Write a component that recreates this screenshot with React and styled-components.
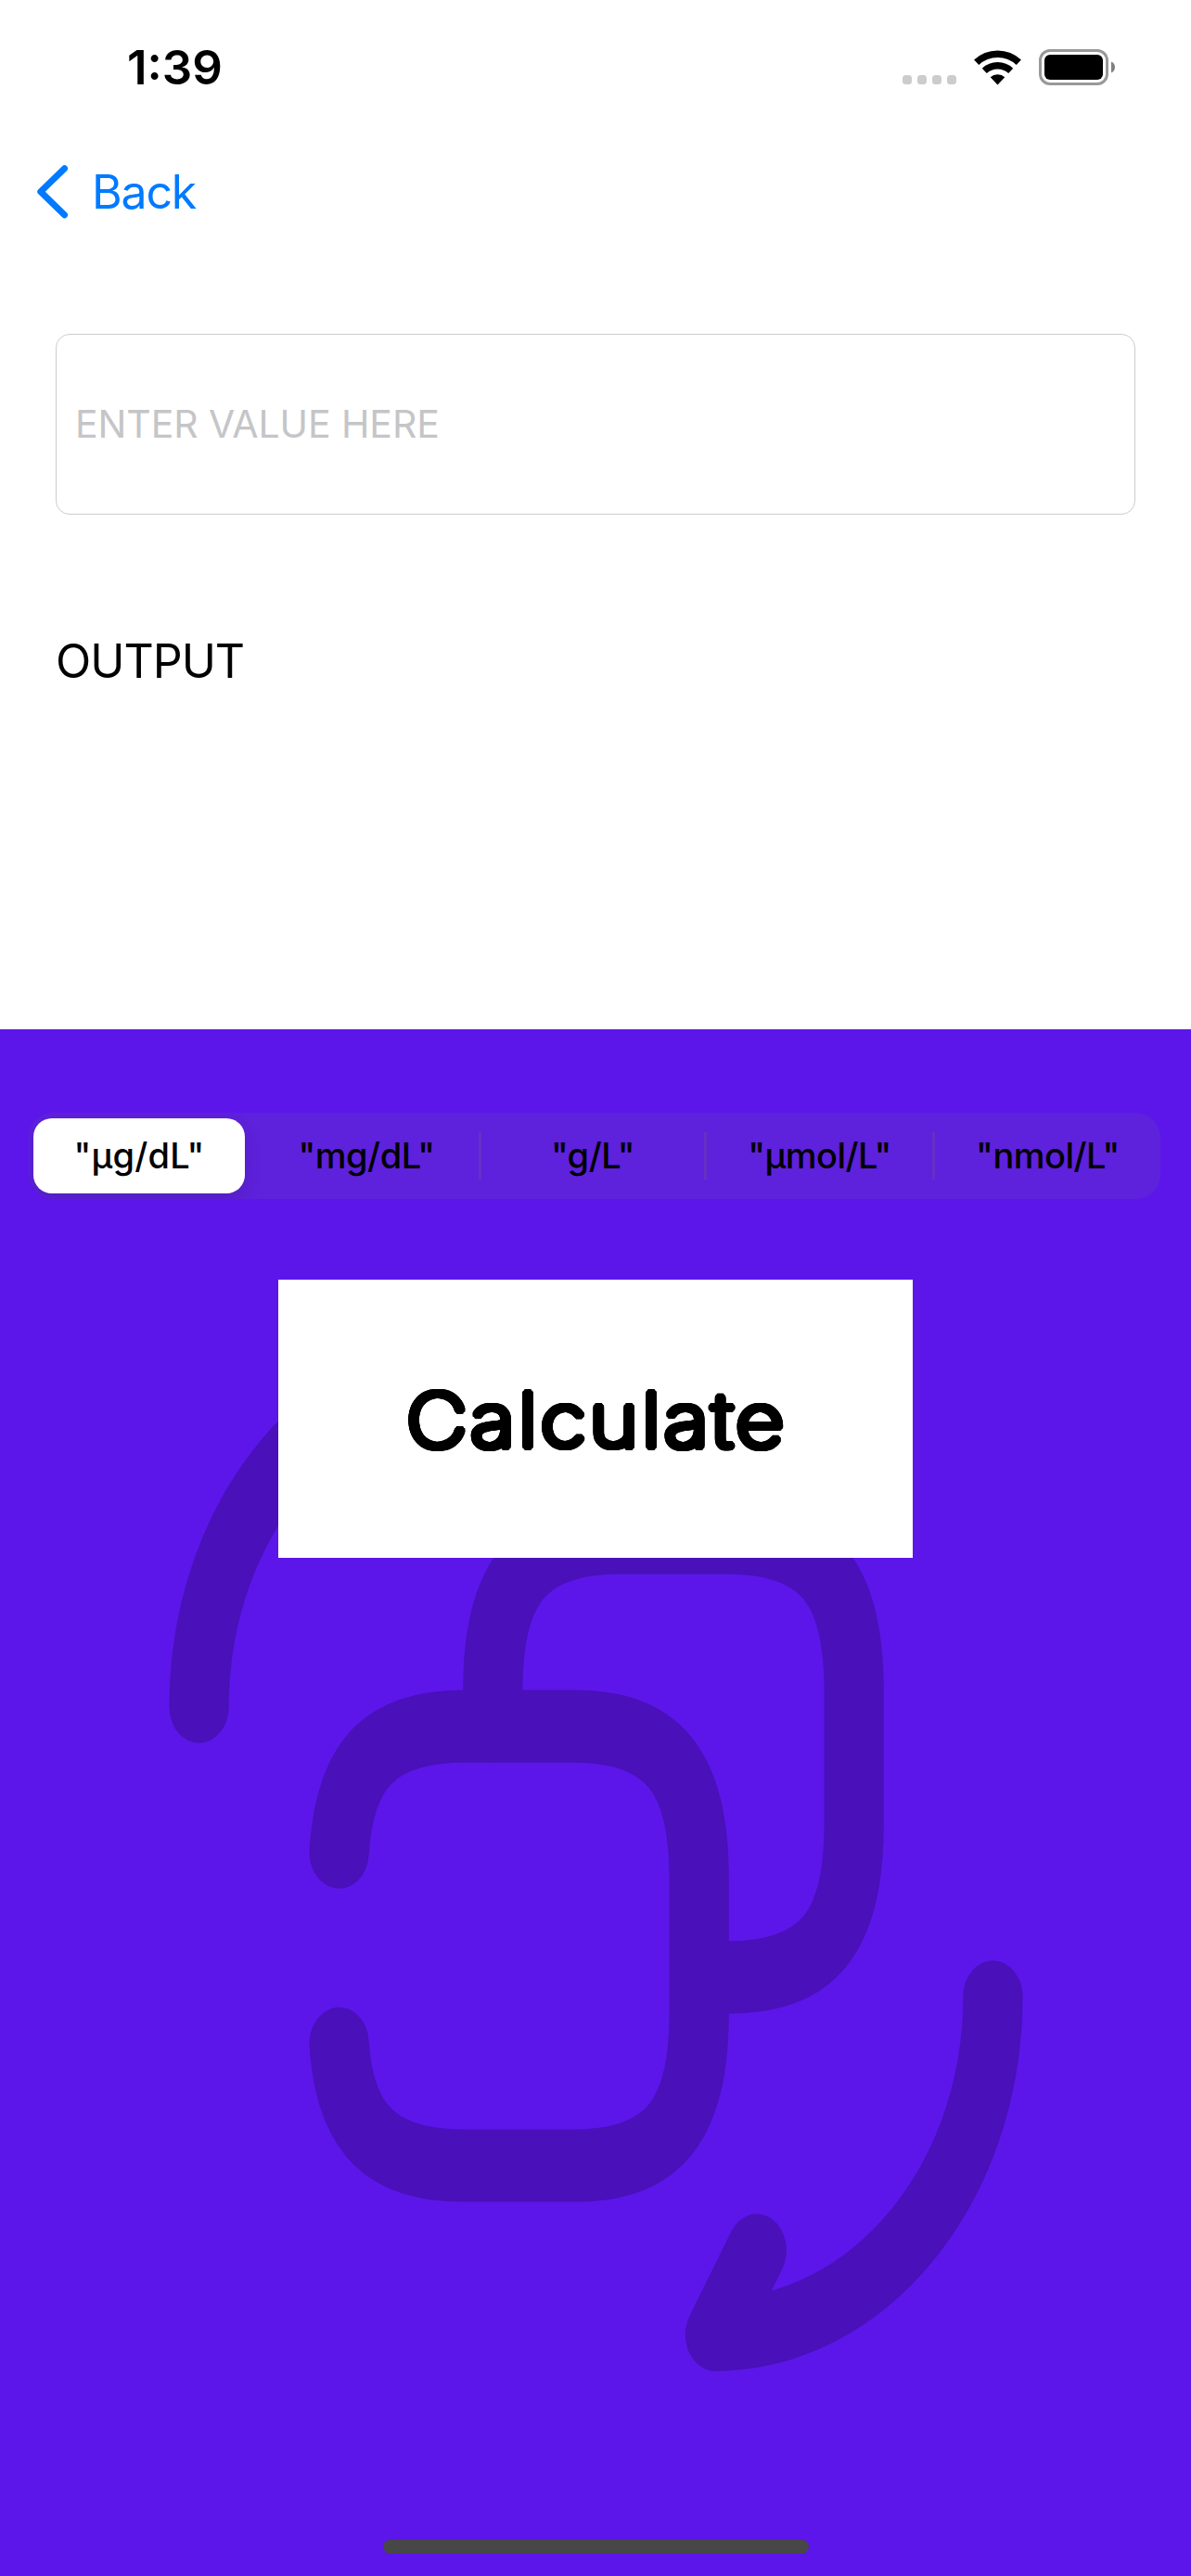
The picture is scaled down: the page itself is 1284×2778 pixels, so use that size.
import React from 'react';
import styled, { createGlobalStyle } from 'styled-components';

const GlobalStyle = createGlobalStyle`
  body { margin: 0; background: #ffffff; }
  * { box-sizing: border-box; }
`;

const Screen = styled.div`
  width: 1284px;
  height: 2778px;
  display: flex;
  flex-direction: column;
  overflow: hidden;
  background: #ffffff;
  color: #000000;
  font-family: Inter, Roboto, 'Liberation Sans', sans-serif;
`;

const StatusBar = styled.header`
  height: 146px;
  padding: 0 82px 0 137px;
  display: flex;
  align-items: center;
  justify-content: space-between;
`;

const Time = styled.span`
  font-size: 51px;
  font-weight: 600;
  line-height: 60px;
  letter-spacing: 0;
`;

const StatusIcons = styled.div`
  display: flex;
  align-items: center;
`;

const SignalDots = styled.div`
  display: flex;
  gap: 6px;
  margin: 26px 19px 0 0;
`;

const Dot = styled.i`
  width: 10px;
  height: 10px;
  border-radius: 3.5px;
  background: #cccccc;
`;

const WifiIcon = styled.svg`
  width: 51px;
  height: 38px;
  margin-right: 19px;
`;

const BatteryIcon = styled.svg`
  width: 82px;
  height: 39px;
  margin-top: -1px;
`;

const NavBar = styled.nav`
  height: 122px;
  padding-left: 38px;
  display: flex;
  align-items: center;
`;

const BackButton = styled.button`
  display: flex;
  align-items: center;
  gap: 25px;
  padding: 0;
  border: 0;
  background: none;
  color: #007aff;
  font: 400 50px/60px Inter, Roboto, sans-serif;
  letter-spacing: -1.2px;
`;

const Chevron = styled.svg`
  width: 36px;
  height: 60px;
`;

const Form = styled.main`
  height: 842px;
  padding: 92px 60px 0;
  display: flex;
  flex-direction: column;
`;

const ValueInput = styled.input`
  width: 100%;
  height: 195px;
  padding: 0 0 2px 20px;
  border: 1px solid #cccccc;
  border-radius: 15px;
  outline: none;
  background: #ffffff;
  font: 400 41px/50px Inter, Roboto, sans-serif;
  letter-spacing: -0.1px;
  &::placeholder {
    color: #c5c5c7;
    opacity: 1;
  }
`;

const Output = styled.p`
  margin: 128px 0 0;
  font-size: 50px;
  line-height: 60px;
  letter-spacing: -1px;
`;

const Panel = styled.section`
  position: relative;
  flex: 1;
  padding: 90px 31px 24px;
  display: flex;
  flex-direction: column;
  align-items: center;
  background: #5c16e9;
`;

const Artwork = styled.svg`
  position: absolute;
  left: 128.7px;
  top: 261.6px;
  width: 1027px;
  height: 1250px;
`;

const Segments = styled.div`
  position: relative;
  align-self: flex-start;
  width: 1220px;
  height: 93px;
  display: grid;
  grid-template-columns: 243px 245px 243px 246px 243px;
  align-items: center;
  overflow: hidden;
  border-radius: 26px;
  background: rgba(118, 118, 128, 0.12);
`;

const Segment = styled.button`
  height: ${(p) => (p.$selected ? 81 : 51)}px;
  width: ${(p) => (p.$selected ? '228px' : 'auto')};
  margin-left: ${(p) => (p.$selected ? 5 : 0)}px;
  padding: 0 0 2px;
  border: 0;
  border-right: ${(p) => (p.$divider ? '3px solid #6630c6' : '0')};
  border-radius: ${(p) => (p.$selected ? 20 : 0)}px;
  background: ${(p) => (p.$selected ? '#ffffff' : 'transparent')};
  box-shadow: ${(p) => (p.$selected ? '0 8px 20px rgba(0, 0, 0, 0.12)' : 'none')};
  color: #000000;
  font: ${(p) => (p.$selected ? 550 : 500)} 38px/50px Inter, Roboto, sans-serif;
  letter-spacing: ${(p) => (p.$selected ? 0.2 : -0.5)}px;
  white-space: nowrap;
`;

/* A thin face thickened evenly all round gives the label its rounded ends. */
const roundedStroke = (radius) =>
  Array.from({ length: 32 }, (_, i) => {
    const a = (i / 32) * Math.PI * 2;
    return `${(Math.cos(a) * radius).toFixed(2)}px ${(Math.sin(a) * radius).toFixed(2)}px 0 #000`;
  }).join(', ');

const CalculateButton = styled.button`
  position: relative;
  display: flex;
  align-items: center;
  justify-content: center;
  width: 684px;
  height: 300px;
  margin-top: 87px;
  padding: 2px 0 0;
  border: 0;
  background: #ffffff;
  color: #000000;
`;

const CalculateLabel = styled.span`
  font: 100 79px/100px Inter, 'Open Sans', sans-serif;
  letter-spacing: 4.2px;
  margin-right: -4.2px;
  text-shadow: ${roundedStroke(4.3)}, ${roundedStroke(2.2)};
  transform: scaleX(1.128);
`;

const HomeIndicator = styled.div`
  width: 459px;
  height: 15px;
  margin-top: auto;
  border-radius: 8px;
  background: #474747;
`;

const UNITS = ['"μg/dL"', '"mg/dL"', '"g/L"', '"μmol/L"', '"nmol/L"'];

export default function App() {
  return (
    <Screen>
      <GlobalStyle />
      <StatusBar>
        <Time>1:39</Time>
        <StatusIcons>
          <SignalDots>
            <Dot />
            <Dot />
            <Dot />
            <Dot />
          </SignalDots>
          <WifiIcon viewBox="0 0 51 38" fill="none" stroke="#000">
            <path d="M2.7 13.3A33.2 33.2 0 0 1 48.3 13.3" strokeWidth="7.6" />
            <path d="M11.3 22.4A20.7 20.7 0 0 1 39.7 22.4" strokeWidth="7.3" />
            <path d="M25.5 37.4L17.7 29.3A11.6 11.6 0 0 1 33.3 29.3Z" fill="#000" stroke="none" />
          </WifiIcon>
          <BatteryIcon viewBox="0 0 82 39">
            <rect x="1.5" y="1.5" width="72" height="36" rx="10.5" fill="none" stroke="#999" strokeWidth="3" />
            <rect x="6" y="6" width="63" height="27" rx="6" />
            <path d="M78 13.5C80.6 14.5 82 16.8 82 19.5S80.6 24.5 78 25.5Z" fill="#808080" />
          </BatteryIcon>
        </StatusIcons>
      </StatusBar>
      <NavBar>
        <BackButton>
          <Chevron viewBox="0 0 36 60" fill="none" stroke="#007aff" strokeWidth="7" strokeLinecap="round" strokeLinejoin="round">
            <path d="M31.5 4.8L5.8 29.8L31.5 54.8" />
          </Chevron>
          Back
        </BackButton>
      </NavBar>
      <Form>
        <ValueInput placeholder="ENTER VALUE HERE" />
        <Output>OUTPUT</Output>
      </Form>
      <Panel>
        <Artwork viewBox="0 0 24 24" preserveAspectRatio="none" fill="none" stroke="#4a10b9" strokeWidth="1.5" strokeLinecap="round" strokeLinejoin="round">
          <path d="M22 15c0 3.87-3.13 7-7 7l1.05-1.75" />
          <path d="M2 9c0-3.87 3.13-7 7-7L7.95 3.75" />
          <path d="M9.4 9.4v-.715c0-2.275.91-3.185 3.185-3.185h2.73c2.275 0 3.185.91 3.185 3.185v2.73c0 2.275-.91 3.185-3.185 3.185H14.6" />
          <path d="M5.53 12.01C5.67 10.15 6.6 9.4 8.685 9.4h2.73c2.275 0 3.185.91 3.185 3.185v2.73c0 2.275-.91 3.185-3.185 3.185h-2.73C6.6 18.5 5.67 17.75 5.53 15.97" />
        </Artwork>
        <Segments>
          {UNITS.map((unit, i) => (
            <Segment key={unit} $selected={i === 0} $divider={i > 0 && i < 4}>
              {unit}
            </Segment>
          ))}
        </Segments>
        <CalculateButton>
          <CalculateLabel>Calculate</CalculateLabel>
        </CalculateButton>
        <HomeIndicator />
      </Panel>
    </Screen>
  );
}
